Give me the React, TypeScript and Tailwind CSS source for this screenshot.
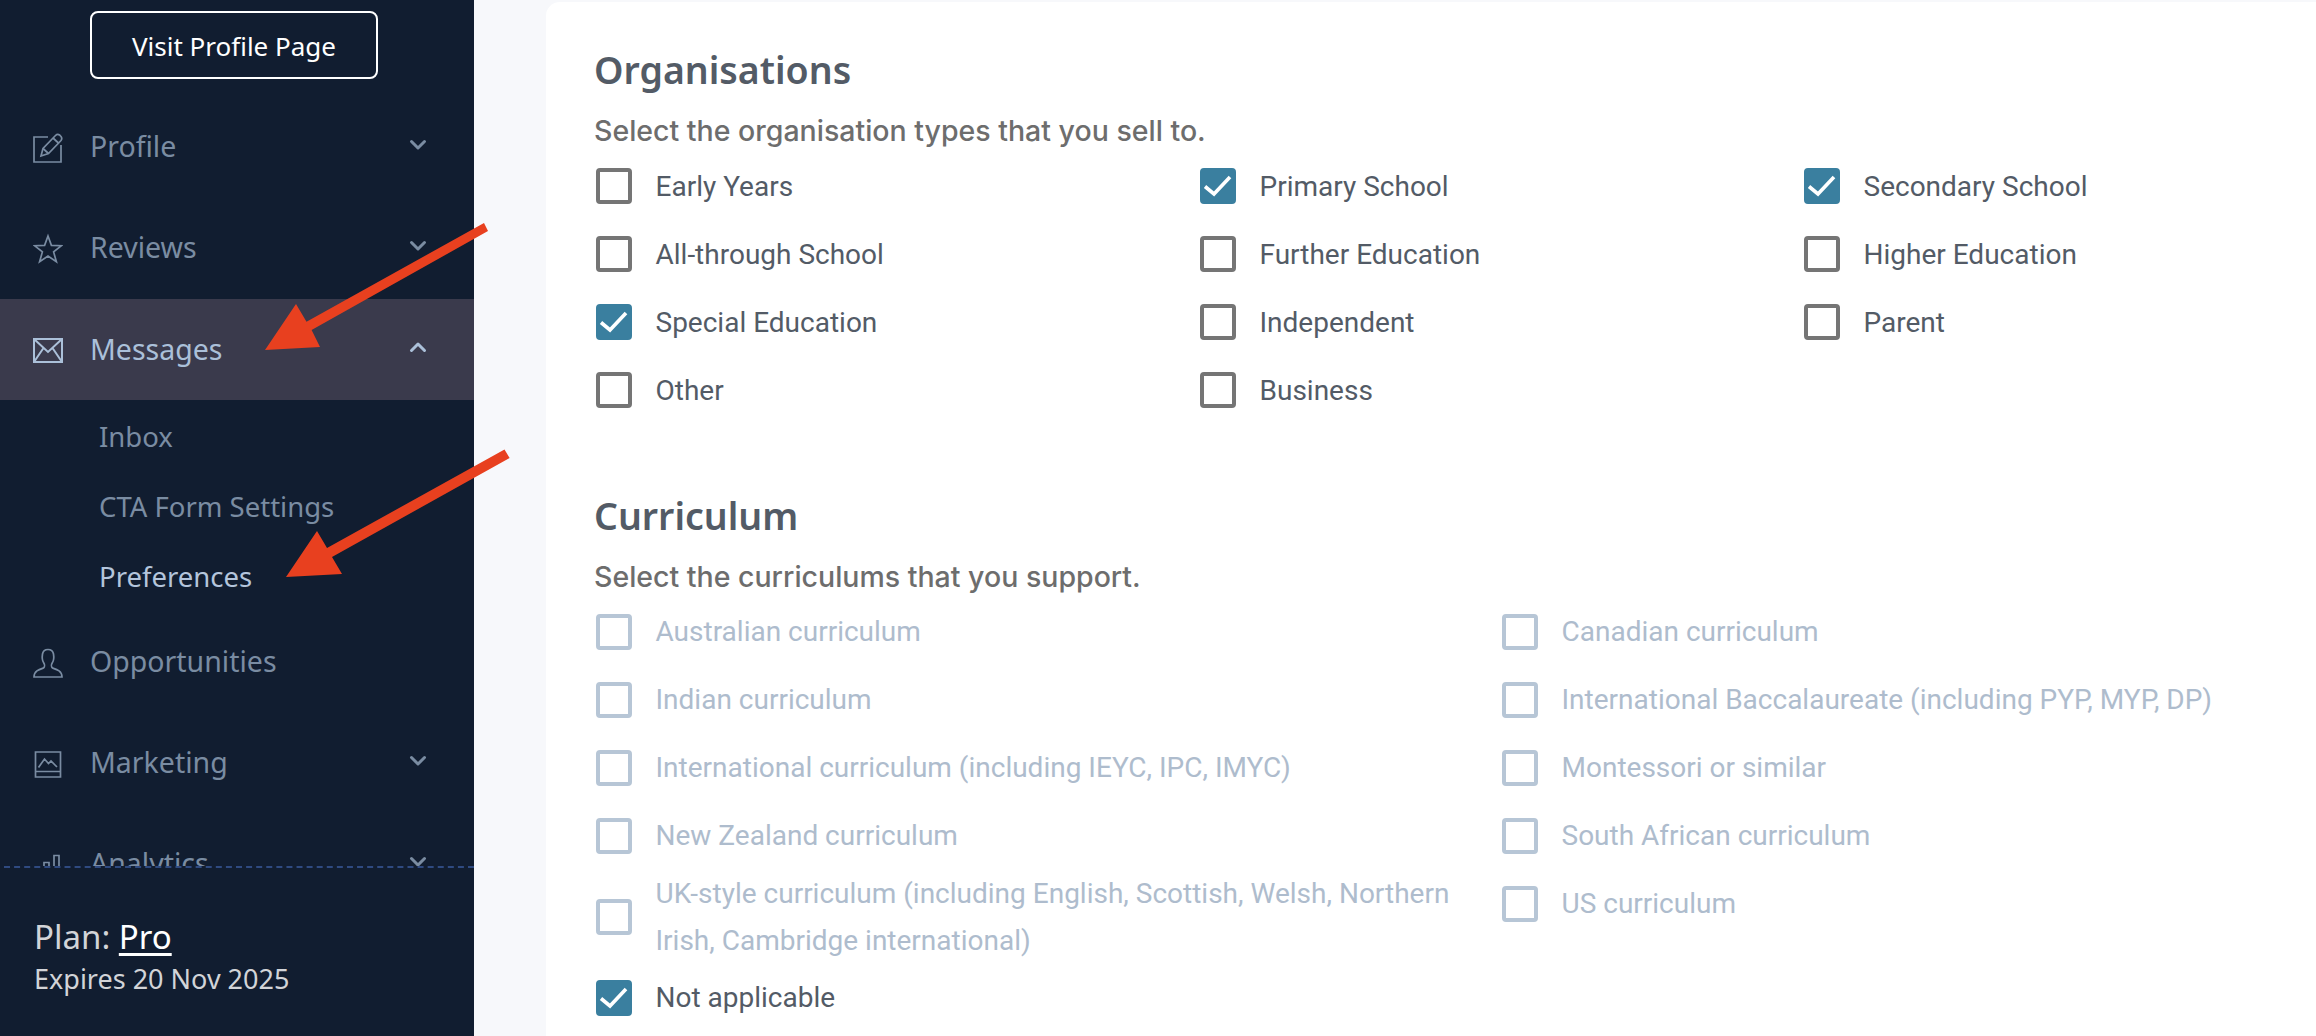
import type { ReactNode } from 'react'

const organisations = [
  { label: 'Early Years', checked: false },
  { label: 'Primary School', checked: true },
  { label: 'Secondary School', checked: true },
  { label: 'All-through School', checked: false },
  { label: 'Further Education', checked: false },
  { label: 'Higher Education', checked: false },
  { label: 'Special Education', checked: true },
  { label: 'Independent', checked: false },
  { label: 'Parent', checked: false },
  { label: 'Other', checked: false },
  { label: 'Business', checked: false },
]

const curriculums = [
  { label: 'Australian curriculum', disabled: true },
  { label: 'Canadian curriculum', disabled: true },
  { label: 'Indian curriculum', disabled: true },
  { label: 'International Baccalaureate (including PYP, MYP, DP)', disabled: true },
  { label: 'International curriculum (including IEYC, IPC, IMYC)', disabled: true },
  { label: 'Montessori or similar', disabled: true },
  { label: 'New Zealand curriculum', disabled: true },
  { label: 'South African curriculum', disabled: true },
  { label: 'UK-style curriculum (including English, Scottish, Welsh, Northern Irish, Cambridge international)', disabled: true },
  { label: 'US curriculum', disabled: true },
  { label: 'Not applicable', checked: true },
]

function Chevron({ up = false, className = '' }: { up?: boolean; className?: string }) {
  return (
    <svg width="18" height="12" viewBox="0 0 18 12" fill="none" stroke="currentColor" strokeWidth="3" strokeLinecap="round" strokeLinejoin="round" className={className}>
      <path d={up ? 'M2.5 9.5 L9 3 L15.5 9.5' : 'M2.5 2.5 L9 9 L15.5 2.5'} />
    </svg>
  )
}

function Glyph({ children, w = 30, h = 32, sw = 1.7 }: { children: ReactNode; w?: number; h?: number; sw?: number }) {
  return (
    <svg width={w} height={h} viewBox={`0 0 ${w} ${h}`} fill="none" stroke="currentColor" strokeWidth={sw} className="shrink-0">
      {children}
    </svg>
  )
}

const EditIcon = (
  <Glyph>
    <path d="M15 5 H1 V30 H28 V13" />
    <path d="M8 24 L10 16.5 L22.5 3.5 Q24.5 1.5 26.5 3 L28 4.5 Q29.5 6.5 28 8.5 L15.5 21.5 Z" />
    <path d="M20 6 L26 11.5 M10 16.5 L15.5 21.5" />
  </Glyph>
)

const StarIcon = (
  <Glyph>
    <path d="M15 3 L18.4 12.4 L28.5 12.7 L20.6 18.9 L23.4 28.7 L15 23 L6.6 28.7 L9.4 18.9 L1.5 12.7 L11.6 12.4 Z" />
  </Glyph>
)

const MailIcon = (
  <Glyph sw={2}>
    <path d="M1 5 H29 V28 H1 Z" />
    <path d="M1 5 L15 18 L29 5 M1 28 L10.5 14 M29 28 L19.5 14" />
  </Glyph>
)

const UserIcon = (
  <Glyph>
    <path d="M1 30 H29 C29 24 24 22.5 19.5 21 C18.2 20 18.2 17.5 19.2 16 C21 13.5 21 10 20.5 7 C20 4 18 2.5 15 2.5 C12 2.5 10 4 9.5 7 C9 10 9 13.5 10.8 16 C11.8 17.5 11.8 20 10.5 21 C6 22.5 1 24 1 30 Z" />
  </Glyph>
)

const PictureIcon = (
  <Glyph>
    <path d="M2.5 4 H27.5 V29 H2.5 Z M2.5 23.5 H27.5" />
    <path d="M5.5 19.5 L11.5 11 L15.5 15.5 L18 13 L24 19" />
  </Glyph>
)

const ChartIcon = (
  <Glyph>
    <path d="M11 28 V13.5 H16 V28 M21 28 V6.5 H26 V28" />
  </Glyph>
)

function NavRow({ icon, label, chevron, active = false }: { icon: ReactNode; label: string; chevron?: 'up' | 'down'; active?: boolean }) {
  return (
    <div className={`flex h-[101px] items-center pl-[33px] pr-[47px] ${active ? 'bg-[#3a3a4c] text-[#abc0d9]' : 'text-[#7a8ca2]'}`}>
      {icon}
      <span className={`ml-[27px] flex-1 text-[28.5px] leading-none ${active ? '-mt-[1px]' : '-mt-[3px]'}`}>{label}</span>
      {chevron && <Chevron up={chevron === 'up'} className="-mt-[6px]" />}
    </div>
  )
}

function Checkbox({ label, checked = false, disabled = false }: { label: string; checked?: boolean; disabled?: boolean }) {
  const box = checked
    ? 'bg-[#3a7f9f] border-[#3a7f9f]'
    : disabled
      ? 'bg-white border-[#b7c6d6]'
      : 'bg-white border-[#757575]'

  return (
    <label className="flex min-h-[68px] items-center pl-[1.5px]">
      <span className={`flex h-9 w-9 shrink-0 rounded-[4px] border-4 ${box}`}>
        {checked && (
          <svg viewBox="0 0 36 36" fill="none" stroke="white" strokeWidth="3.6" className="-m-1 h-9 w-9 shrink-0">
            <path d="M5 18.5 L14 26 L30 9" />
          </svg>
        )}
      </span>
      <span className={`ml-[24px] text-[28px] leading-[47px] ${disabled ? 'text-[#aebccd]' : 'text-[#535b66]'}`}>
        {label}
      </span>
    </label>
  )
}

export default function App() {
  return (
    <div className="relative flex h-[1036px] w-[2316px] overflow-hidden bg-[#f7f8fb] font-['Roboto',sans-serif]">
      <aside className="flex w-[474px] shrink-0 flex-col bg-[#111d30] font-['Noto_Sans',sans-serif]">
        <div className="h-[866px] shrink-0 overflow-hidden pt-[11px]">
          <button className="mb-[18px] ml-[90px] block h-[68px] w-[288px] rounded-[8px] border-2 border-white pt-[3px] text-[26px] text-white">
            Visit Profile Page
          </button>
          <NavRow icon={EditIcon} label="Profile" chevron="down" />
          <NavRow icon={StarIcon} label="Reviews" chevron="down" />
          <NavRow icon={MailIcon} label="Messages" chevron="up" active />
          <div className="flex flex-col pt-[2px] pl-[99px] text-[27.5px] leading-none text-[#7a8ca2]">
            <a className="flex h-[70px] items-center">Inbox</a>
            <a className="flex h-[70px] items-center">CTA Form Settings</a>
            <a className="flex h-[70px] items-center text-[#b4c5dc]">Preferences</a>
          </div>
          <NavRow icon={UserIcon} label="Opportunities" />
          <NavRow icon={PictureIcon} label="Marketing" chevron="down" />
          <NavRow icon={ChartIcon} label="Analytics" chevron="down" />
        </div>
        <div className="ml-[4px] flex-1 border-t-2 border-dashed border-[#2f4a80] pl-[30px] pt-[48px] text-[#d2d4d8]">
          <p className="text-[33px] leading-[42px]">
            Plan: <a className="text-white underline underline-offset-4">Pro</a>
          </p>
          <p className="mt-[2px] text-[27px] leading-[38px]">Expires 20 Nov 2025</p>
        </div>
      </aside>

      <main className="ml-[72px] mt-[2px] flex-1 overflow-hidden rounded-tl-[14px] bg-white pl-[48px] pt-[43px]">
        <div className="w-[1812px]">
          <h2 className="font-['Noto_Sans',sans-serif] text-[37.5px] font-semibold leading-[50px] text-[#535b66]">Organisations</h2>
          <p className="mt-[16px] font-['Inter',sans-serif] text-[28.5px] font-medium leading-[40px] text-[#6d6d6d]">
            Select the organisation types that you sell to.
          </p>
          <div className="mt-[1px] grid grid-cols-3">
            {organisations.map((item) => (
              <Checkbox key={item.label} label={item.label} checked={item.checked} />
            ))}
          </div>

          <h2 className="mt-[67px] font-['Noto_Sans',sans-serif] text-[37.5px] font-semibold leading-[50px] text-[#535b66]">Curriculum</h2>
          <p className="mt-[15.5px] font-['Inter',sans-serif] text-[28.5px] font-medium leading-[40px] text-[#6d6d6d]">
            Select the curriculums that you support.
          </p>
          <div className="mt-[1px] grid grid-cols-2 items-start">
            {curriculums.map((item) => (
              <div key={item.label} className="max-w-[880px]">
                <Checkbox label={item.label} checked={item.checked} disabled={item.disabled} />
              </div>
            ))}
          </div>
        </div>
      </main>

      <svg className="pointer-events-none absolute inset-0" width="2316" height="1036" viewBox="0 0 2316 1036" fill="#e8401f">
        <polygon points="484,223 488,231 311.6,330 320,347 265,350 296,304 306.5,321.7" />
        <polygon points="504.5,449.5 509.6,458 332,557 342,574 286,577 317,531 327,548" />
      </svg>
    </div>
  )
}
